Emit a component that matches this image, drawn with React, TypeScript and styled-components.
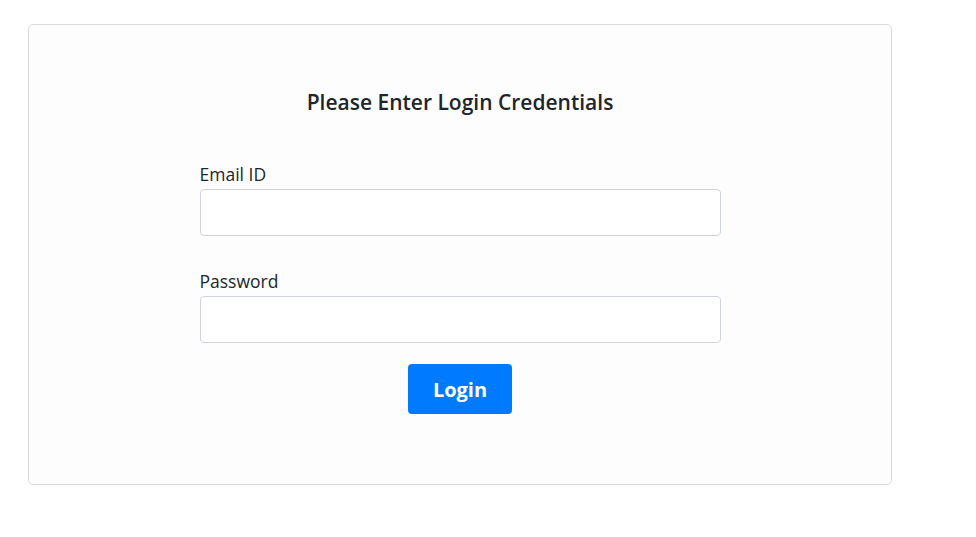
import React from "react";
import styled, { createGlobalStyle } from "styled-components";

const Global = createGlobalStyle`
  html, body { margin: 0; padding: 0; background: #ffffff; }
  body { font-family: "Open Sans", "Noto Sans", Arial, sans-serif; color: #212529; }
  * { box-sizing: border-box; }
`;

const Page = styled.div`
  padding: 24px 0 0 28px;
`;

const Card = styled.div`
  width: 864px;
  height: 461px;
  background: #fdfdfd;
  border: 1px solid #dcdcdc;
  border-radius: 5px;
  display: flex;
  flex-direction: column;
  align-items: center;
  padding-top: 63px;
`;

const Title = styled.h2`
  margin: 0 0 46px;
  font-size: 21px;
  line-height: 28px;
  font-weight: 600;
  color: #212529;
`;

const Form = styled.form`
  width: 521px;
  display: flex;
  flex-direction: column;
  align-items: center;
`;

const Field = styled.div<{ $gap: number }>`
  width: 100%;
  display: flex;
  flex-direction: column;
  margin-bottom: ${(p) => p.$gap}px;
`;

const Label = styled.label`
  font-size: 17.5px;
  line-height: 24px;
  margin-bottom: 3px;
  color: #212529;
`;

const Input = styled.input`
  width: 100%;
  height: 47px;
  border: 1px solid #ced4da;
  border-radius: 4px;
  background: #ffffff;
  font-size: 16px;
  padding: 6px 12px;
  outline: none;
`;

const Button = styled.button`
  width: 104px;
  height: 50px;
  border: none;
  border-radius: 4px;
  background: #007bff;
  color: #ffffff;
  font-family: "Open Sans", "Noto Sans", Arial, sans-serif;
  font-size: 20px;
  font-weight: 700;
  cursor: pointer;
`;

export default function App() {
  return (
    <>
      <Global />
      <Page>
        <Card>
          <Title>Please Enter Login Credentials</Title>
          <Form onSubmit={(e) => e.preventDefault()}>
            <Field $gap={33}>
              <Label>Email ID</Label>
              <Input type="email" />
            </Field>
            <Field $gap={21}>
              <Label>Password</Label>
              <Input type="password" />
            </Field>
            <Button type="submit">Login</Button>
          </Form>
        </Card>
      </Page>
    </>
  );
}
